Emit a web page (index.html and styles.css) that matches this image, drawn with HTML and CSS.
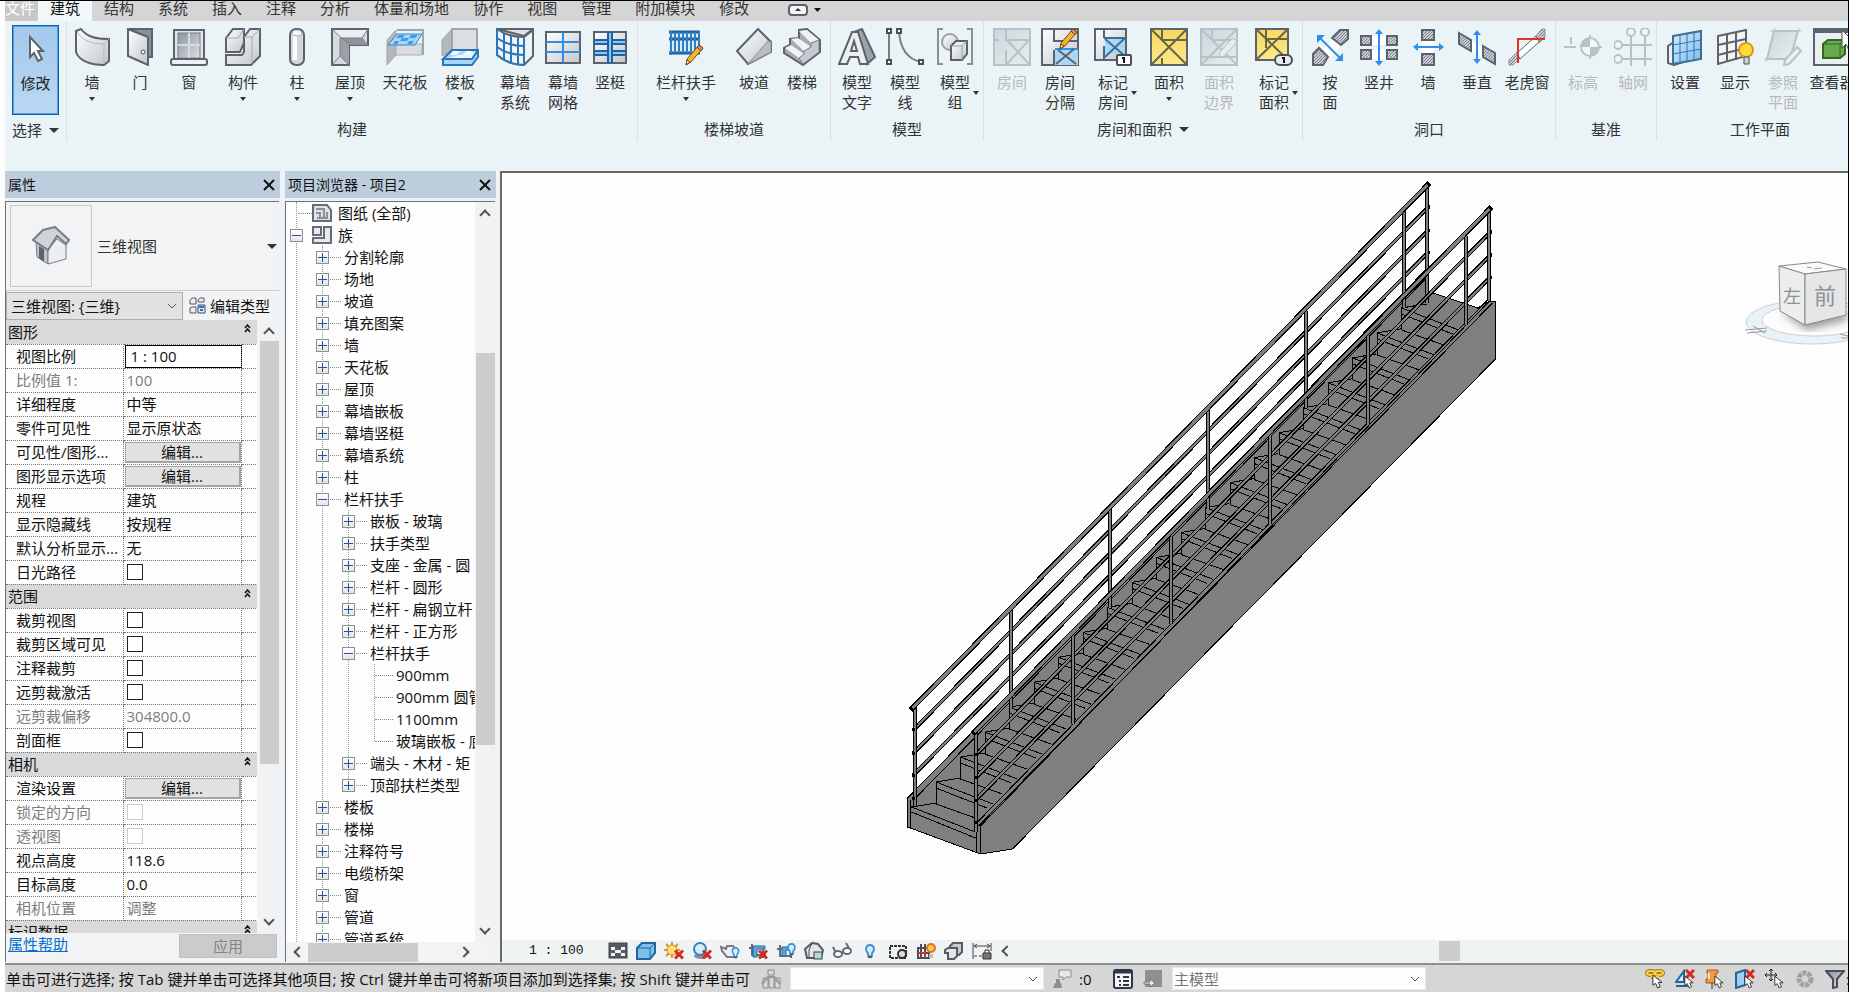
FILE: index.html
```html
<!DOCTYPE html>
<html lang="zh-CN">
<head>
<meta charset="utf-8">
<title>项目2 - 三维视图: {三维}</title>
<link rel="stylesheet" href="styles.css">
</head>
<body>
<svg class="defs" aria-hidden="true">
  <defs>
    <linearGradient id="g" x1="0" y1="0" x2="1" y2="1"><stop offset="0" stop-color="#fff"/><stop offset="1" stop-color="#c3c6cc"/></linearGradient>
    <linearGradient id="gd" x1="0" y1="0" x2="1" y2="1"><stop offset="0" stop-color="#8d939c"/><stop offset="1" stop-color="#dde0e4"/></linearGradient>
    <linearGradient id="gb" x1="0" y1="0" x2="1" y2="1"><stop offset="0" stop-color="#d4ebfa"/><stop offset="1" stop-color="#7fbbe8"/></linearGradient>
    <linearGradient id="gy" x1="0" y1="0" x2="0" y2="1"><stop offset="0" stop-color="#f8d860"/><stop offset="1" stop-color="#fbe98c"/></linearGradient>
    <pattern id="hatch" width="3" height="3" patternUnits="userSpaceOnUse"><rect width="3" height="3" fill="#c9ccd1"/><path d="M0 3L3 0" stroke="#7b818a"/></pattern>
    <symbol id="pencil" viewBox="0 0 20 22"><path d="M15 1l4 3L7 18l-5 3 1-6z" fill="#f5b52a" stroke="#6b4a1c"/><path d="M15 1l4 3-2 3-4-4z" fill="#e58a72" stroke="#6b4a1c"/><path d="M2 21l1-5 3 2z" fill="#fff3da" stroke="#6b4a1c"/></symbol>
    <symbol id="x" viewBox="0 0 10 10"><path d="M1 1l8 8M9 1l-8 8" stroke="#d22a24" stroke-width="3"/></symbol>
    <symbol id="bulb" viewBox="0 0 10 16"><path d="M3 10C-1 6 1 1 5 1s6 5 2 9v3H3z" fill="#d8efff" stroke="#3e8fd0" stroke-width="2"/><path d="M3 14h4" stroke="#555" stroke-width="2"/></symbol>
    <symbol id="cur" viewBox="0 0 12 16"><path d="M1 1v11l3-2 2 5 3-1-2-5h4z" fill="#fff" stroke="#222"/></symbol>
  </defs>
</svg>
<div class="app">
  <nav class="tabs">
    <button class="tab file">文件</button><button class="tab active">建筑</button><button class="tab">结构</button><button class="tab">系统</button><button class="tab">插入</button><button class="tab">注释</button><button class="tab">分析</button><button class="tab">体量和场地</button><button class="tab">协作</button><button class="tab">视图</button><button class="tab">管理</button><button class="tab">附加模块</button><button class="tab">修改</button>
    <button class="tab-toggle" aria-label="最小化功能区"><svg width="34" height="12"><rect x="1" y="1" width="18" height="10" rx="3" fill="#f5f5f7" stroke="#5d6068" stroke-width="2"/><path d="M7 7l3-3 3 3z" fill="#333"/><path d="M26 4h7l-3.500 4z" fill="#111"/></svg></button>
  </nav>

  <section class="ribbon">
    <div class="group select-group">
      <button class="modify"><svg width="20" height="30" viewBox="0 0 20 30"><path d="M4 3v20l4-4 4 8 4-2-4-8h5z" fill="#fff" stroke="#5d636c" stroke-width="2"/></svg><span>修改</span></button>
      <button class="title">选择<i class="tri big"></i></button>
    </div>

    <div class="group">
      <div class="tools">
        <button class="tool w50"><svg viewBox="0 0 38 38"><path d="M3 3l5-2c6 8 15 10 28 10v22l-5 4C18 37 6 33 3 24z" fill="url(#g)" stroke="#5d636c" stroke-width="2"/><path d="M4 4c6 9 15 12 27 12v20M31 16l5-5" fill="none" stroke="#b5bac1"/></svg><span class="lab">墙</span><i class="tri"></i></button>
        <button class="tool w46"><svg viewBox="0 0 38 38"><path d="M7 1h24v28h-5V9z" fill="#8b919b" stroke="#5d636c" stroke-width="2"/><path d="M7 1l20 8v28L7 28z" fill="url(#g)" stroke="#5d636c" stroke-width="2"/><circle cx="22" cy="24" r="2" fill="#fff" stroke="#4a4f57"/></svg><span class="lab">门</span></button>
        <button class="tool w52"><svg viewBox="0 0 38 38"><rect x="4" y="2" width="30" height="30" fill="#e3e6ea" stroke="#5d636c" stroke-width="2"/><rect x="8" y="5" width="22" height="25" fill="url(#gd)" stroke="#777d86"/><path d="M19 5v25M8 17h22" stroke="#cfdbe6" stroke-width="2"/><rect x="1" y="31" width="36" height="6" rx="2" fill="#f0f1f3" stroke="#5d636c" stroke-width="2"/></svg><span class="lab">窗</span></button>
        <button class="tool w56"><svg viewBox="0 0 38 38"><path d="M2 10l7-9h11v14l-4 9H2z" fill="url(#g)" stroke="#5d636c" stroke-width="2"/><path d="M26 1h10v27l-9 9H2V27h16l2-3V9z" fill="url(#g)" stroke="#5d636c" stroke-width="2"/><path d="M2 10h12l6-9M20 9h8l8-8M28 9v27" fill="none" stroke="#a6abb2"/></svg><span class="lab">构件</span><i class="tri"></i></button>
        <button class="tool w52"><svg viewBox="0 0 38 38"><rect x="12" y="1" width="14" height="36" rx="6" fill="#d3d6db" stroke="#5d636c" stroke-width="2"/><path d="M17 7v25" stroke="#fff" stroke-width="4"/><ellipse cx="19" cy="5" rx="5" ry="3" fill="#f5f6f7" stroke="#a6abb2"/></svg><span class="lab">柱</span><i class="tri"></i></button>
        <button class="tool w54"><svg viewBox="0 0 38 38"><path d="M1 1h36v16H18v20H1z" fill="#d6d9dd" stroke="#5d636c" stroke-width="2"/><path d="M9 10h22l5 7H18z" fill="#8e949d"/><path d="M9 10l9 7v19l-9-8z" fill="#9aa0a8"/><path d="M2 2l7 8h22l5-8z" fill="#eceef0"/><path d="M1 1l17 16M31 10l6-9M31 10l6 7M9 28l-8 9M9 28l9 9M9 10h22M9 10v18" stroke="#7b818a" fill="none"/></svg><span class="lab">屋顶</span><i class="tri"></i></button>
        <button class="tool w56"><svg viewBox="0 0 38 38"><path d="M1 12v25l9-10V2z" fill="#b3b8bf" stroke="#a0a5ad"/><path d="M10 16h26v11H10z" fill="#d9dbdf" stroke="#a9aeb5"/><path d="M11 2h26v25" fill="none" stroke="#a0a5ad" stroke-width="2"/><path d="M11 6h25l-7 11H2z" fill="#a8d6f8" stroke="#3484c6"/><path d="M13 7h6l-3 3h-6zM25 7h7l-3 3h-6zM16 10h7l-2 3h-7zM9 13h4l-2 3H7zM23 13h5l-2 3h-5z" fill="#3e9bee"/></svg><span class="lab">天花板</span></button>
        <button class="tool w54"><svg viewBox="0 0 38 38"><path d="M1 28V12L11 1v22z" fill="#b3b8bf" stroke="#a0a5ad"/><path d="M11 1h25v22H11z" fill="#dcdee2" stroke="#a0a5ad" stroke-width="2"/><path d="M2 31l9-9h26l-6 9zM2 31v6h29l6-8v-6" fill="#a8d6f8" stroke="#2b76b8" stroke-width="2"/><path d="M12 23h7l-3 4h-6zM25 23h6l-3 4h-6zM17 27h5l-2 3h-6z" fill="#f0f9ff"/></svg><span class="lab">楼板</span><i class="tri"></i></button>
        <button class="tool w56"><svg viewBox="0 0 38 38"><path d="M1 1h36l-9 7z" fill="#dfe2e6" stroke="#5d636c" stroke-width="2"/><path d="M1 1c8 6 16 8 27 8l9-7v26l-9 9C17 37 8 33 1 27z" fill="#eef4f9" stroke="#5d636c" stroke-width="2"/><path d="M1 10c8 6 16 8 27 8M1 19c8 6 16 8 27 8M8 5v27M15 8v27M22 9v27M28 10v27M1 1v26c7 6 16 10 27 10" fill="none" stroke="#2b76b8" stroke-width="2"/></svg><span class="lab">幕墙<br>系统</span></button>
        <button class="tool w40"><svg viewBox="0 0 38 38"><rect x="2" y="4" width="34" height="31" fill="url(#g)" stroke="#5d636c" stroke-width="2"/><path d="M19 4v31M2 14h34M2 24h34" stroke="#2f8fe8" stroke-width="2"/></svg><span class="lab">幕墙<br>网格</span></button>
        <button class="tool w54"><svg viewBox="0 0 38 38"><rect x="3" y="4" width="32" height="31" fill="url(#g)" stroke="#5d636c" stroke-width="2"/><path d="M3 14h32M3 25h32" stroke="#1d62a3" stroke-width="6"/><path d="M4 14h30M4 25h30" stroke="#8cc6f2" stroke-width="2"/><path d="M19 4v31" stroke="#1d62a3" stroke-width="6"/><path d="M19 5v29" stroke="#8cc6f2" stroke-width="2"/></svg><span class="lab">竖梃</span></button>
      </div>
      <div class="title">构建</div>
    </div>

    <div class="group">
      <div class="tools">
        <button class="tool w96"><svg viewBox="0 0 38 38"><path d="M2 3h30v24H2z" fill="#d9ecfa"/><path d="M2 4h31M2 11h31M2 25h31" stroke="#1d62a3" stroke-width="3"/><path d="M4 3v24M8 4v21M12 4v21M16 4v21M20 4v21M24 4v21M28 4v21M32 3v20" stroke="#2f7fc4" stroke-width="2"/><use href="#pencil" x="17" y="16" width="20" height="22"/></svg><span class="lab">栏杆扶手</span><i class="tri"></i></button>
        <button class="tool w40"><svg viewBox="0 0 38 38"><path d="M2 23L23 1l13 13v10L13 36z" fill="url(#g)" stroke="#5d636c" stroke-width="2"/><path d="M13 36L33 13l3 1v10z" fill="#b9bdc4" stroke="#8a9098"/></svg><span class="lab">坡道</span></button>
        <button class="tool w56"><svg viewBox="0 0 38 38"><path d="M1 20l6-3v-6l9-1V2l8-1 13 11v12L20 37 1 25z" fill="#a6abb3" stroke="#5d636c" stroke-width="2"/><path d="M2 20l6-3 13 9-5 4zM8 11l7-1 13 9-7 4zM16 3l8-1 12 10-8 3z" fill="#f1f2f4"/><path d="M16 30l5-4v-3l7-4v-4l8-3v12L20 36z" fill="#c6cad0" stroke="#777d86"/></svg><span class="lab">楼梯</span></button>
      </div>
      <div class="title">楼梯坡道</div>
    </div>

    <div class="group">
      <div class="tools">
        <button class="tool w52"><svg viewBox="0 0 38 38"><path d="M16 4l8-3 13 28-8 7z" fill="#9ca2ab" stroke="#5d636c" stroke-width="2"/><path d="M14 4h6l10 32h-8l-2-7h-8l-3 7H1zM16 13l-3 10h6z" fill="#eceef0" fill-rule="evenodd" stroke="#5d636c" stroke-width="2"/></svg><span class="lab">模型<br>文字</span></button>
        <button class="tool w44"><svg viewBox="0 0 38 38"><path d="M3 3v31M13 3c1 18 8 28 22 31" stroke="#777d86" stroke-width="2" fill="none"/><path d="M1 1h4v4H1zM1 32h4v4H1zM11 1h4v4h-4zM33 32h4v4h-4z" fill="#fff" stroke="#4a4f57" stroke-width="2"/></svg><span class="lab">模型<br>线</span></button>
        <button class="tool w56"><svg viewBox="0 0 38 38"><path d="M7 1H2v35h5M31 1h5v35h-5" fill="none" stroke="#8a9098" stroke-width="2"/><circle cx="14" cy="14" r="8" fill="url(#g)" stroke="#9aa0a8" stroke-width="2"/><path d="M15 18l5-5h11v13l-5 6H15z" fill="url(#g)" stroke="#5d636c" stroke-width="2"/><path d="M15 18h11v14M26 18l5-5" stroke="#9aa0a8" fill="none"/></svg><span class="lab">模型<br>组<i class="tri"></i></span></button>
      </div>
      <div class="title">模型</div>
    </div>

    <div class="group">
      <div class="tools">
        <button class="tool w56" disabled><svg viewBox="0 0 38 38"><rect x="1" y="1" width="36" height="36" fill="url(#gd)" stroke="#4a4f57" stroke-width="2"/><path d="M13 2v12M13 22v14M13 12h24M14 12l22 24M36 12L14 36M1 12h5" stroke="#4a4f57" stroke-width="2"/></svg><span class="lab">房间</span></button>
        <button class="tool w40"><svg viewBox="0 0 38 38"><rect x="1" y="1" width="36" height="36" fill="url(#g)" stroke="#5d636c" stroke-width="2"/><path d="M14 21h23v16H14z" fill="#a9d8f5"/><path d="M14 21h23" stroke="#2f8fe8" stroke-width="2"/><path d="M13 2v12M13 22v14M14 13h23M15 36l18-15M17 22l18 14" stroke="#5d636c" stroke-width="2"/><use href="#pencil" x="17" y="0" width="20" height="22"/></svg><span class="lab">房间<br>分隔</span></button>
        <button class="tool w66"><svg viewBox="0 0 38 38"><rect x="1" y="1" width="31" height="31" fill="url(#g)" stroke="#5d636c" stroke-width="2"/><path d="M11 10h20v16H11z" fill="#a9d8f5"/><path d="M10 2v8M10 18v13M10 10h22M11 11l20 17M31 10L11 29" stroke="#3e6e94" stroke-width="2"/><rect x="23" y="27" width="14" height="10" rx="1" fill="#fff" stroke="#4a4f57" stroke-width="2"/><path d="M28 30h2v5" stroke="#111" stroke-width="2" fill="none"/></svg><span class="lab">标记<br>房间<i class="tri"></i></span></button>
        <button class="tool w46"><svg viewBox="0 0 38 38"><rect x="1" y="1" width="36" height="36" fill="url(#gy)" stroke="#5d636c" stroke-width="2"/><path d="M2 2l34 34M36 2L2 36M12 2v10M12 30v6M12 12h24" stroke="#6b6548" stroke-width="2"/></svg><span class="lab">面积</span><i class="tri"></i></button>
        <button class="tool w54" disabled><svg viewBox="0 0 38 38"><rect x="1" y="1" width="36" height="36" fill="url(#gd)" stroke="#4a4f57" stroke-width="2"/><path d="M2 2l34 34M36 2L2 36M12 2v10M2 29h34M12 12h24" stroke="#4a4f57" stroke-width="2"/><path d="M33 10l4 4-13 14-5 1 1-5z" fill="#ddd" stroke="#4a4f57"/></svg><span class="lab">面积<br>边界</span></button>
        <button class="tool w56"><svg viewBox="0 0 38 38"><rect x="1" y="1" width="32" height="31" fill="url(#gy)" stroke="#5d636c" stroke-width="2"/><path d="M2 2l30 29M32 2L2 31M11 2v18M11 11h21" stroke="#6b6548" stroke-width="2"/><rect x="20" y="27" width="17" height="10" rx="5" fill="#e9eaec" stroke="#4a4f57" stroke-width="2"/><path d="M27 30h2v5" stroke="#111" stroke-width="2" fill="none"/></svg><span class="lab">标记<br>面积<i class="tri"></i></span></button>
      </div>
      <button class="title">房间和面积<i class="tri big"></i></button>
    </div>

    <div class="group">
      <div class="tools">
        <button class="tool w54"><svg viewBox="0 0 38 38"><path d="M12 21l12-12 7 7-12 13z" fill="#fff"/><path d="M2 26l6-6 9 9-5 8H2zM21 10l8-8h8v9l-7 6z" fill="url(#hatch)" stroke="#5d636c" stroke-width="2"/><path d="M8 9l22 22" stroke="#2f8fe8" stroke-width="2"/><path d="M6 7h8l-8 8zM32 33h-8l8-8z" fill="#2f8fe8"/></svg><span class="lab">按<br>面</span></button>
        <button class="tool w44"><svg viewBox="0 0 38 38"><path d="M10 8h18v9H10zM10 22h18v9H10z" fill="#fff"/><path d="M1 8h10v9H1zM27 8h10v9H27zM1 22h10v9H1zM27 22h10v9H27z" fill="url(#hatch)" stroke="#5d636c" stroke-width="2"/><path d="M19 6v27" stroke="#2f8fe8" stroke-width="2"/><path d="M15 6l4-5 4 5zM15 33l4 5 4-5z" fill="#2f8fe8"/></svg><span class="lab">竖井</span></button>
        <button class="tool w54"><svg viewBox="0 0 38 38"><path d="M13 12h12v14H13z" fill="#fff"/><path d="M13 2h12v10H13zM13 26h12v11H13z" fill="url(#hatch)" stroke="#5d636c" stroke-width="2"/><path d="M8 19h23" stroke="#2f8fe8" stroke-width="2"/><path d="M9 15l-5 4 5 4zM30 15l5 4-5 4z" fill="#2f8fe8"/></svg><span class="lab">墙</span></button>
        <button class="tool w44"><svg viewBox="0 0 38 38"><path d="M12 12l13 7v11l-13-8z" fill="#fff"/><path d="M1 5l12 7v11L1 16zM25 18l12 7v11l-12-7z" fill="url(#hatch)" stroke="#5d636c" stroke-width="2"/><path d="M19 6v26" stroke="#2f8fe8" stroke-width="2"/><path d="M15 7l4-5 4 5zM15 31l4 5 4-5z" fill="#2f8fe8"/></svg><span class="lab">垂直</span></button>
        <button class="tool w56"><svg viewBox="0 0 38 38"><path d="M1 37v-5l8-8 3 6-7 7zM27 9l7-8h3v8l-6 6z" fill="url(#hatch)" stroke="#8a9098"/><path d="M9 25L28 8l3 6-19 17z" fill="#fff" stroke="#5d636c"/><path d="M10 35V11h27" stroke="#e0342b" stroke-width="2" fill="none"/></svg><span class="lab">老虎窗</span></button>
      </div>
      <div class="title">洞口</div>
    </div>

    <div class="group">
      <div class="tools">
        <button class="tool w54" disabled><svg viewBox="0 0 38 38"><path d="M0 19h12M34 19h4M26 7v4M26 27v4M7 9v7" stroke="#4a4f57" stroke-width="2"/><circle cx="26" cy="19" r="9" fill="#fff" stroke="#4a4f57" stroke-width="2"/><path d="M26 10v18a9 9 0 0 0 9-9H17a9 9 0 0 1 9-9z" fill="#4a4f57"/></svg><span class="lab">标高</span></button>
        <button class="tool w46" disabled><svg viewBox="0 0 38 38"><path d="M17 8v30M31 8v30M8 17h30M8 31h30" stroke="#4a4f57" stroke-width="2"/><g fill="#fff" stroke="#4a4f57" stroke-width="2"><circle cx="17" cy="4" r="4"/><circle cx="31" cy="4" r="4"/><circle cx="4" cy="17" r="4"/><circle cx="4" cy="31" r="4"/></g></svg><span class="lab">轴网</span></button>
      </div>
      <div class="title">基准</div>
    </div>

    <div class="group last">
      <div class="tools">
        <button class="tool w56"><svg viewBox="0 0 38 38"><path d="M2 18l6-4v23l-6-2zM8 30l15-4v6L8 37z" fill="#eee" stroke="#5d636c" stroke-width="2"/><path d="M7 8l28-5v28L7 36z" fill="url(#gb)" stroke="#3e6e94" stroke-width="2"/><path d="M14 7v28M21 6v27M28 4v28M7 17l28-5M7 26l28-5" stroke="#2b76b8" fill="none"/></svg><span class="lab">设置</span></button>
        <button class="tool w44"><svg viewBox="0 0 38 38"><path d="M2 8l28-6v26L2 36z" fill="#f2f3f5" stroke="#5d636c" stroke-width="2"/><path d="M11 6v28M20 4v28M2 17l28-6M2 27l28-7" stroke="#5d636c" stroke-width="2"/><circle cx="30" cy="22" r="7" fill="#ffdc3c" stroke="#d99a1e" stroke-width="2"/><path d="M28 29h5v7h-5z" fill="#ccd0d6" stroke="#4a4f57"/></svg><span class="lab">显示</span></button>
        <button class="tool w52" disabled><svg viewBox="0 0 38 38"><path d="M10 3h24l-8 28H3z" fill="url(#gd)" stroke="#4a4f57" stroke-width="2"/><path d="M6 3h31M0 31h28M11 0L2 34M35 0l-4 14" stroke="#4a4f57"/><path d="M33 19l4 4-12 13-5 1 1-5z" fill="#eee" stroke="#4a4f57" stroke-width="2"/></svg><span class="lab">参照<br>平面</span></button>
        <button class="tool w46"><svg viewBox="0 0 38 38"><rect x="1" y="1" width="38" height="36" fill="#eceff1" stroke="#5d636c" stroke-width="2"/><path d="M0 0h38v5H0z" fill="#5d636c"/><path d="M10 16l5-4h17v14l-5 4H10z" fill="#6aa84f" stroke="#2c6a1e" stroke-width="2"/><path d="M10 16h17v14M27 16l5-4" fill="none" stroke="#2c6a1e"/><path d="M29 2v18l4-4 3 6 2-1V11z" fill="#fff" stroke="#4a4f57"/></svg><span class="lab">查看器</span></button>
      </div>
      <div class="title">工作平面</div>
    </div>
  </section>

  <main class="work">
    <aside class="panel props">
      <header class="bar"><h2>属性</h2><button class="close" aria-label="关闭属性"><svg width="12" height="12"><path d="M1 1l10 10M11 1L1 11" stroke="#111" stroke-width="2"/></svg></button></header>
      <div class="body">
        <div class="type">
          <div class="thumb"><svg width="38" height="40" viewBox="0 0 38 40"><path d="M4 15l12 9v14L5 31z" fill="#bfc3c9" stroke="#777d86"/><path d="M16 23l9-10 9 6v14l-18 5z" fill="#eceef0" stroke="#777d86"/><path d="M7 20l5 3v13l-5-4z" fill="#5d636c"/><path d="M1 14L11 4l12-3L37 14l-3 4-9-8-9 14z" fill="#d0d3d8" stroke="#777d86" stroke-width="2"/></svg></div>
          <span>三维视图</span><button class="open" aria-label="类型选择器"><i class="tri big"></i></button>
        </div>
        <div class="instance">
          <select aria-label="视图"><option>三维视图: {三维}</option></select>
          <button class="edit-type"><svg width="17" height="17"><path d="M1 3l2-2h4v6H1zM9 3l2-2h4v4H9zM1 11l2-1h4v6H1z" fill="#eceef0" stroke="#555b64"/><path d="M9 8h7v8H9z" fill="#d9ecfa" stroke="#3b4a5c"/><path d="M10 10h5M11 13h3" stroke="#2b76b8" stroke-width="2"/></svg>编辑类型</button>
        </div>
        <div class="grid-wrap">
          <div class="grid">
            <table>
              <colgroup><col class="c1"><col class="c2"><col class="c3"></colgroup>
              <tr class="sec"><th colspan="3">图形</th></tr>
              <tr><td><label for="scale">视图比例</label></td><td class="flush"><input id="scale" type="text" value="1 : 100"></td><td></td></tr>
              <tr class="off"><td>比例值 1:</td><td>100</td><td></td></tr>
              <tr><td>详细程度</td><td>中等</td><td></td></tr>
              <tr><td>零件可见性</td><td>显示原状态</td><td></td></tr>
              <tr><td>可见性/图形...</td><td class="flush"><button class="edit">编辑...</button></td><td></td></tr>
              <tr><td>图形显示选项</td><td class="flush"><button class="edit">编辑...</button></td><td></td></tr>
              <tr><td>规程</td><td>建筑</td><td></td></tr>
              <tr><td>显示隐藏线</td><td>按规程</td><td></td></tr>
              <tr><td>默认分析显示...</td><td>无</td><td></td></tr>
              <tr><td><label for="k1">日光路径</label></td><td><input id="k1" type="checkbox"></td><td></td></tr>
              <tr class="sec"><th colspan="3">范围</th></tr>
              <tr><td><label for="k2">裁剪视图</label></td><td><input id="k2" type="checkbox"></td><td></td></tr>
              <tr><td><label for="k3">裁剪区域可见</label></td><td><input id="k3" type="checkbox"></td><td></td></tr>
              <tr><td><label for="k4">注释裁剪</label></td><td><input id="k4" type="checkbox"></td><td></td></tr>
              <tr><td><label for="k5">远剪裁激活</label></td><td><input id="k5" type="checkbox"></td><td></td></tr>
              <tr class="off"><td>远剪裁偏移</td><td>304800.0</td><td></td></tr>
              <tr><td><label for="k6">剖面框</label></td><td><input id="k6" type="checkbox"></td><td></td></tr>
              <tr class="sec"><th colspan="3">相机</th></tr>
              <tr><td>渲染设置</td><td class="flush"><button class="edit">编辑...</button></td><td></td></tr>
              <tr class="off"><td><label for="k7">锁定的方向</label></td><td><input id="k7" type="checkbox" disabled></td><td></td></tr>
              <tr class="off"><td><label for="k8">透视图</label></td><td><input id="k8" type="checkbox" disabled></td><td></td></tr>
              <tr><td>视点高度</td><td>118.6</td><td></td></tr>
              <tr><td>目标高度</td><td>0.0</td><td></td></tr>
              <tr class="off"><td>相机位置</td><td>调整</td><td></td></tr>
              <tr class="sec"><th colspan="3">标识数据</th></tr>
            </table>
          </div>
          <div class="vbar p"><i class="chev up"></i><div class="track"><div class="knob"></div></div><i class="chev down"></i></div>
        </div>
        <footer><a href="#help">属性帮助</a><button class="apply" disabled>应用</button></footer>
      </div>
    </aside>

    <aside class="panel browser">
      <header class="bar"><h2>项目浏览器 - 项目2</h2><button class="close" aria-label="关闭项目浏览器"><svg width="12" height="12"><path d="M1 1l10 10M11 1L1 11" stroke="#111" stroke-width="2"/></svg></button></header>
      <div class="body">
        <div class="tree-wrap">
          <ul class="tree">
            <li class="leaf0"><div class="row"><svg width="20" height="18"><path d="M1 1h14l4 5v11H1z" fill="#dfe2e6" stroke="#666c75" stroke-width="2"/><path d="M4 5h8v8M4 9h4v5M15 8v6H5" fill="none" stroke="#8a9098" stroke-width="2"/></svg>图纸 (全部)</div></li>
            <li><div class="row"><button class="exp minus" aria-label="折叠"></button><svg class="cat" width="20" height="18"><path d="M1 1h8v8H1zM12 1h7v16H1v-5h11z" fill="#e8eaed" stroke="#666c75" stroke-width="2"/></svg>族</div>
              <ul class="l1">
                <li><div class="row"><button class="exp" aria-label="展开"></button><span>分割轮廓</span></div></li>
                <li><div class="row"><button class="exp" aria-label="展开"></button><span>场地</span></div></li>
                <li><div class="row"><button class="exp" aria-label="展开"></button><span>坡道</span></div></li>
                <li><div class="row"><button class="exp" aria-label="展开"></button><span>填充图案</span></div></li>
                <li><div class="row"><button class="exp" aria-label="展开"></button><span>墙</span></div></li>
                <li><div class="row"><button class="exp" aria-label="展开"></button><span>天花板</span></div></li>
                <li><div class="row"><button class="exp" aria-label="展开"></button><span>屋顶</span></div></li>
                <li><div class="row"><button class="exp" aria-label="展开"></button><span>幕墙嵌板</span></div></li>
                <li><div class="row"><button class="exp" aria-label="展开"></button><span>幕墙竖梃</span></div></li>
                <li><div class="row"><button class="exp" aria-label="展开"></button><span>幕墙系统</span></div></li>
                <li><div class="row"><button class="exp" aria-label="展开"></button><span>柱</span></div></li>
                <li><div class="row"><button class="exp minus" aria-label="折叠"></button><span>栏杆扶手</span></div>
                  <ul class="l2">
                    <li><div class="row"><button class="exp" aria-label="展开"></button><span>嵌板 - 玻璃</span></div></li>
                    <li><div class="row"><button class="exp" aria-label="展开"></button><span>扶手类型</span></div></li>
                    <li><div class="row"><button class="exp" aria-label="展开"></button><span>支座 - 金属 - 圆</span></div></li>
                    <li><div class="row"><button class="exp" aria-label="展开"></button><span>栏杆 - 圆形</span></div></li>
                    <li><div class="row"><button class="exp" aria-label="展开"></button><span>栏杆 - 扁钢立杆</span></div></li>
                    <li><div class="row"><button class="exp" aria-label="展开"></button><span>栏杆 - 正方形</span></div></li>
                    <li><div class="row"><button class="exp minus" aria-label="折叠"></button><span>栏杆扶手</span></div>
                      <ul class="l3">
                        <li><div class="row"><span>900mm</span></div></li>
                        <li><div class="row"><span>900mm 圆管</span></div></li>
                        <li><div class="row"><span>1100mm</span></div></li>
                        <li><div class="row"><span>玻璃嵌板 - 底</span></div></li>
                      </ul>
                    </li>
                    <li><div class="row"><button class="exp" aria-label="展开"></button><span>端头 - 木材 - 矩</span></div></li>
                    <li><div class="row"><button class="exp" aria-label="展开"></button><span>顶部扶栏类型</span></div></li>
                  </ul>
                </li>
                <li><div class="row"><button class="exp" aria-label="展开"></button><span>楼板</span></div></li>
                <li><div class="row"><button class="exp" aria-label="展开"></button><span>楼梯</span></div></li>
                <li><div class="row"><button class="exp" aria-label="展开"></button><span>注释符号</span></div></li>
                <li><div class="row"><button class="exp" aria-label="展开"></button><span>电缆桥架</span></div></li>
                <li><div class="row"><button class="exp" aria-label="展开"></button><span>窗</span></div></li>
                <li><div class="row"><button class="exp" aria-label="展开"></button><span>管道</span></div></li>
                <li><div class="row"><button class="exp" aria-label="展开"></button><span>管道系统</span></div></li>
              </ul>
            </li>
          </ul>
          <div class="vbar b"><i class="chev up"></i><div class="track"><div class="knob"></div></div><i class="chev down"></i></div>
        </div>
        <div class="hbar"><i class="chev left"></i><div class="knob"></div><i class="chev right"></i></div>
      </div>
    </aside>

    <section class="view">
      <div class="canvas">
        <svg class="model" viewBox="503 173 1345 767" shape-rendering="crispEdges">
          <defs>
            <path id="step" d="M0 22V0L24-4M0 0L57 22M0 6L51 26M0 22L42 37"/>
            <path id="rail" d="M0 0L515-523"/>
            <g id="steps5"><use href="#step"/><use href="#step" x="24.500" y="-24.950"/><use href="#step" x="49" y="-49.900"/><use href="#step" x="73.500" y="-74.850"/><use href="#step" x="98" y="-99.800"/></g>
            <g id="lower-rails"><use href="#rail" y="24"/><use href="#rail" y="47"/><use href="#rail" y="69"/></g>
          </defs>
          <path d="M908 798L1428 268V291L1478 308L1490 301L1496 302V359L1013 849L981 854L908 827Z" fill="#7f7f7f" stroke="#000"/>
          <g fill="none" stroke="#000">
            <use href="#steps5" x="936.500" y="782"/><use href="#steps5" x="1059" y="657.250"/><use href="#steps5" x="1181.500" y="532.500"/><use href="#steps5" x="1304" y="407.750"/>
            <path d="M912 807L937 803M912 807L976 832M912 812L976 838M911 800V828M914 800L1428 277M1402 308L1428 304"/>
          </g>
          <g fill="none" stroke="#000" stroke-width="4"><use href="#lower-rails" x="914" y="706"/></g>
          <g fill="none" stroke="#7f7f7f" stroke-width="2"><use href="#lower-rails" x="914" y="706"/></g>
          <path d="M915 706V806M1011 610V708M1110 508V608M1208 410V509M1306 311V408M1404 211V308M1427 184V303" stroke="#000" stroke-width="4"/>
          <path d="M915 706V806M1011 610V708M1110 508V608M1208 410V509M1306 311V408M1404 211V308M1427 184V303" stroke="#7f7f7f" stroke-width="2"/>
          <use href="#rail" x="913" y="708" stroke="#000" stroke-width="5" stroke-linecap="square"/><use href="#rail" x="913" y="708" stroke="#7f7f7f" stroke-width="3"/>
          <path d="M981 826L1490 301L1496 302V359L1013 849L981 854Z" fill="#7f7f7f" stroke="#000"/>
          <path d="M977 823L1488 300M979 826L1493 303M977 823V853" fill="none" stroke="#000"/>
          <g fill="none" stroke="#000" stroke-width="4"><use href="#lower-rails" x="976" y="731"/></g>
          <g fill="none" stroke="#7f7f7f" stroke-width="2"><use href="#lower-rails" x="976" y="731"/></g>
          <path d="M976 731V832M1073 636V724M1171 537V624M1270 435V524M1368 336V425M1466 236V325M1489 208V301" stroke="#000" stroke-width="4"/>
          <path d="M976 731V832M1073 636V724M1171 537V624M1270 435V524M1368 336V425M1466 236V325M1489 208V301" stroke="#7f7f7f" stroke-width="2"/>
          <use href="#rail" x="975" y="732" stroke="#000" stroke-width="5" stroke-linecap="square"/><use href="#rail" x="975" y="732" stroke="#7f7f7f" stroke-width="3"/>
          <path d="M912 728h3v3h-3zM912 752h3v3h-3zM912 774h3v3h-3zM912 797h3v3h-3zM974 753h3v3h-3zM974 776h3v3h-3zM974 799h3v3h-3zM974 821h3v3h-3zM1428 205h2v3h-2zM1428 229h2v3h-2zM1428 251h2v3h-2zM1490 230h2v3h-2zM1490 253h2v3h-2zM1490 276h2v3h-2z"/>
        </svg>
        <svg class="cube" width="129" height="120" viewBox="0 0 129 120">
          <defs><filter id="soft"><feGaussianBlur stdDeviation="4"/></filter></defs>
          <ellipse cx="93" cy="82" rx="66" ry="22" fill="#e9f3f7" stroke="#ccd0d3"/>
          <ellipse cx="95" cy="80" rx="52" ry="16" fill="#fdfdfd" stroke="#ccd0d3"/>
          <path d="M62 72L88 90L129 80V72Z" fill="#999" filter="url(#soft)"/>
          <path d="M60 26L99 22L127 29L86 34Z" fill="#fafafa" stroke="#888"/>
          <path d="M60 26L86 34V85L61 71Z" fill="#eceded" stroke="#888"/>
          <path d="M86 34L127 29V75L86 85Z" fill="#e6e6e8" stroke="#888"/>
          <text x="64" y="63" font-size="18" fill="#8b9098">左</text><text x="95" y="64" font-size="22" fill="#8b9098">前</text>
          <path d="M88 27l5 1M95 29l8-1M26 90l22-2M28 93l20-2M34 86l12 7M121 94l8 2M122 98h7" stroke="#999"/>
        </svg>
      </div>
      <div class="view-bar">
        <button class="scale">1 : 100</button>
        <div class="view-tools">
          <button aria-label="详细程度"><svg viewBox="0 0 20 18"><rect x="1" y="1" width="18" height="15" fill="#555b64" stroke="#444"/><path d="M3 5h4v3H3zM13 5h4v3h-4zM7 8h6v3H7zM3 11h4v3H3zM13 11h4v3h-4z" fill="#f3f3f3"/></svg></button>
          <button aria-label="视觉样式"><svg viewBox="0 0 20 18"><path d="M1 6l5-5h13v10l-5 6H1z" fill="#7dc0ee" stroke="#24659c" stroke-width="2"/><path d="M1 6h13v11M14 6l5-5" fill="none" stroke="#24659c"/></svg></button>
          <button aria-label="日光路径"><svg viewBox="0 0 20 18"><path d="M8 0v16M0 8h16M2 2l12 12M14 2L2 14" stroke="#e09a20" stroke-width="2"/><circle cx="8" cy="8" r="5" fill="#ffe07a" stroke="#d48a18"/><use href="#x" x="10" y="7" width="10" height="11"/></svg></button>
          <button aria-label="阴影"><svg viewBox="0 0 20 18"><ellipse cx="9" cy="14" rx="7" ry="3" fill="#8a8f97"/><circle cx="8" cy="7" r="6" fill="#d4ebfa" stroke="#3a84c0" stroke-width="2"/><use href="#x" x="10" y="7" width="10" height="11"/></svg></button>
          <button aria-label="渲染"><svg viewBox="0 0 20 18"><path d="M1 5l5 2 1-3h6l3 4-2 7H7L2 9z" fill="#eceef0" stroke="#777d86" stroke-width="2"/><use href="#bulb" x="11" y="5" width="9" height="12"/></svg></button>
          <button aria-label="裁剪视图"><svg viewBox="0 0 20 18"><path d="M1 6h14v10M4 2v11h14" fill="none" stroke="#666c75" stroke-width="2"/><path d="M5 4h12v3H9v8H5z" fill="#5aa6e6" stroke="#24659c"/><use href="#x" x="10" y="7" width="10" height="11"/></svg></button>
          <button aria-label="显示裁剪区域"><svg viewBox="0 0 20 18"><path d="M1 7h14v9M4 3v11h12" fill="none" stroke="#666c75" stroke-width="2"/><path d="M6 5h8v3h-4v6H6z" fill="#5aa6e6" stroke="#24659c"/><use href="#bulb" x="11" y="1" width="9" height="13"/></svg></button>
          <button aria-label="锁定视图"><svg viewBox="0 0 20 18"><path d="M1 7l7-6 6 1 5 6-2 8H3z" fill="#e3e5e8" stroke="#555b64" stroke-width="2"/><path d="M8 1L5 8v8" stroke="#4a4f57" fill="none"/><rect x="10" y="10" width="8" height="7" fill="#b5d8cf" stroke="#345"/></svg></button>
          <button aria-label="临时隐藏"><svg viewBox="0 0 20 18"><path d="M1 5l3 6M9 12l3-2M18 8L14 1" fill="none" stroke="#666c75" stroke-width="2"/><ellipse cx="6" cy="12" rx="4" ry="3" fill="#fff" stroke="#666c75" stroke-width="2"/><ellipse cx="15" cy="9" rx="4" ry="3" fill="#fff" stroke="#666c75" stroke-width="2"/></svg></button>
          <button aria-label="显示隐藏的图元"><svg viewBox="0 0 20 18"><use href="#bulb" x="5" y="2" width="10" height="15"/></svg></button>
          <button aria-label="临时视图属性"><svg viewBox="0 0 20 18"><path d="M2 4h16v12H2z" fill="#eee" stroke="#333" stroke-width="2" stroke-dasharray="3 1"/><circle cx="14" cy="12" r="4" fill="#ddd" stroke="#333" stroke-width="2"/></svg></button>
          <button aria-label="分析模型"><svg viewBox="0 0 20 18"><path d="M2 6h11v10H2zM5 2v14M9 2v14M2 11h11" fill="none" stroke="#4a4f57" stroke-width="2"/><path d="M2 11h7v5" stroke="#c33" stroke-width="2" fill="none"/><circle cx="15" cy="6" r="4" fill="#ffc54a" stroke="#e0741b" stroke-width="2"/><path d="M13 12h4v4h-4z" fill="#b9bdc4"/></svg></button>
          <button aria-label="位移集"><svg viewBox="0 0 20 18"><path d="M6 4l3-3h9v9l-3 3H6z" fill="#c6cad0" stroke="#555b64" stroke-width="2"/><path d="M1 8l3-2h9v8l-3 3H4V11H1z" fill="#e3e5e8" stroke="#555b64" stroke-width="2"/></svg></button>
          <button aria-label="显示约束"><svg viewBox="0 0 20 18"><path d="M1 1v16M19 1v8M2 4h16M5 2L2 4l3 2M15 2l3 2-3 2M2 14h3M7 14h3" fill="none" stroke="#444" stroke-width="1"/><path d="M11 11h8v6h-8z" fill="#777" stroke="#333"/><path d="M13 11V8h4v3" fill="none" stroke="#333"/></svg></button>
        </div>
        <i class="chev left small"></i>
        <div class="scroller"><div class="knob"></div></div>
      </div>
    </section>
  </main>

  <footer class="status">
    <span class="msg">单击可进行选择; 按 Tab 键并单击可选择其他项目; 按 Ctrl 键并单击可将新项目添加到选择集; 按 Shift 键并单击可</span>
    <svg class="s20" viewBox="0 0 20 20"><path d="M7 1h6v5H7zM2 9h5v10H2zM8 8h5v11H8zM14 9h5v10h-5z" fill="#d9d9d9" stroke="#8a8a8a"/><path d="M1 15l6-7 6 0 6 7" fill="none" stroke="#999" stroke-width="2"/></svg>
    <select class="combo" aria-label="工作集"><option></option></select>
    <svg class="s20 req" viewBox="0 0 20 20"><path d="M7 1h12v7h-5l-3 3V8H7z" fill="#e8e8e8" stroke="#8a8a8a"/><path d="M1 19l2-5h6l1 5zM4 10h4v4H4z" fill="#8f8f8f"/></svg>
    <span class="count">:0</span>
    <svg class="s20 opt" viewBox="0 0 20 20"><rect x="1" y="1" width="18" height="18" rx="2" fill="#f5f5f5" stroke="#2d3748" stroke-width="2"/><path d="M1 3h18" stroke="#2d3748" stroke-width="3"/><path d="M4 8h3M10 8h6M6 12h2M10 12h6M6 16h2M10 16h6" stroke="#2d3748" stroke-width="2" fill="none"/></svg>
    <svg class="s20" viewBox="0 0 20 20"><path d="M2 1h17v17H2z" fill="#8f8f8f"/><path d="M1 13h6v-3l5 4-5 4v-3H1z" fill="#eee" stroke="#777"/></svg>
    <select class="combo main" aria-label="设计选项"><option>主模型</option></select>
    <div class="filters">
      <button aria-label="选择链接"><svg viewBox="0 0 20 20"><g fill="none" stroke="#a87a10" stroke-width="4"><ellipse cx="6" cy="4" rx="4" ry="2"/><ellipse cx="14" cy="4" rx="4" ry="2"/><path d="M6 8h8"/></g><g fill="none" stroke="#f5d24a" stroke-width="2"><ellipse cx="6" cy="4" rx="4" ry="2"/><ellipse cx="14" cy="4" rx="4" ry="2"/><path d="M6 8h8"/></g><use href="#cur" x="7" y="5" width="11" height="15"/></svg></button>
      <button aria-label="选择基线图元"><svg viewBox="0 0 20 20"><path d="M1 13L9 2v11zM1 17h12" fill="#d4ebfa" stroke="#24659c" stroke-width="2"/><use href="#x" x="10" y="0" width="10" height="10"/><use href="#cur" x="9" y="6" width="10" height="14"/></svg></button>
      <button aria-label="选择锁定图元"><svg viewBox="0 0 20 20"><path d="M2 1h11v3h-2v6h2v4H1v-4h2V4H2z" fill="#f29a3f" stroke="#b0541a"/><path d="M4 4v6" stroke="#ffe0b8" stroke-width="2"/><path d="M7 14v6" stroke="#333"/><use href="#cur" x="9" y="6" width="10" height="14"/></svg></button>
      <button aria-label="按面选择"><svg viewBox="0 0 20 20"><path d="M1 4l9-3v15l-9 3z" fill="#9fd0f2" stroke="#24659c" stroke-width="2"/><use href="#x" x="10" y="0" width="10" height="10"/><use href="#cur" x="9" y="6" width="10" height="14"/></svg></button>
      <button aria-label="选择时拖曳"><svg viewBox="0 0 20 20"><path d="M6 0v12M0 6h12M4 2l2-2 2 2M4 10l2 2 2-2M2 4L0 6l2 2M10 4l2 2-2 2" fill="none" stroke="#222"/><use href="#cur" x="9" y="6" width="10" height="14"/></svg></button>
      <button aria-label="后台进程"><svg viewBox="0 0 20 20"><circle cx="10" cy="10" r="6" fill="none" stroke="#a0a0a0" stroke-width="5" stroke-dasharray="4 1"/></svg></button>
      <button aria-label="过滤器"><svg viewBox="0 0 20 20"><path d="M1 2h18l-7 8v8l-4 1v-9z" fill="url(#gd)" stroke="#4a4f57" stroke-width="2"/></svg></button>
      <span>:</span>
    </div>
  </footer>
</div>
</body>
</html>
```
FILE: styles.css
```css
* { box-sizing: border-box; }
html, body { height: 100%; margin: 0; }
body {
  font: 15px/20px "Open Sans", "Noto Sans CJK SC", sans-serif;
  color: #111;
  background: #fdfdfd;
  overflow: hidden;
}
button, input, select { font: inherit; color: inherit; margin: 0; }
button { background: none; border: 0; padding: 0; }
h2 { margin: 0; font-weight: 400; font-size: 14px; }
ul { list-style: none; margin: 0; padding: 0; }
svg { flex: none; }
.defs { position: absolute; width: 0; height: 0; }
.app {
  display: flex;
  flex-direction: column;
  height: 100vh;
  padding-left: 5px;
  border-top: 1px solid #000;
  border-right: 1px solid #000;
}

/* tabs */
.tabs { display: flex; flex: none; height: 20px; background: #d5d5d5; }
.tab { padding: 0 12px 5px; line-height: 15px; color: #333; white-space: nowrap; }
.tab.file { padding: 0 3px 5px 0; background: #c8c8c8; color: #fff; }
.tab.active { background: #f2f8fa; color: #111; }
.tab-toggle { margin: 3px 0 0 27px; height: 12px; display: flex; }

/* ribbon */
.ribbon { display: flex; flex: none; height: 150px; background: #eaf4f7; overflow: hidden; }
.group { flex: none; height: 120px; border-left: 1px solid #e3dcdd; display: flex; flex-direction: column; }
.select-group { width: 61px; border: 0; }
.tools { display: flex; height: 97px; }
.title { display: flex; flex: none; justify-content: center; align-items: center; gap: 7px; height: 24px; color: #333; white-space: nowrap; }
.last .title { padding-left: 8px; }
.tool { flex: none; display: flex; flex-direction: column; align-items: center; padding-top: 7px; color: #333; }
.tool svg { width: 38px; height: 38px; margin-bottom: 6px; }
.lab { position: relative; white-space: nowrap; }
.lab .tri { position: absolute; right: -9px; top: 19px; }
.tool:disabled { color: #b8b8ba; }
.tool:disabled svg { opacity: 0.3; }
.w40 { width: 40px; } .w44 { width: 44px; } .w46 { width: 46px; } .w50 { width: 50px; } .w52 { width: 52px; }
.w54 { width: 54px; } .w56 { width: 56px; } .w66 { width: 66px; } .w96 { width: 96px; }
.tri { display: block; width: 0; height: 0; border: 3px solid transparent; border-top: 4px solid #333; border-bottom: 0; }
.tool > .tri { margin-top: 5px; }
.tri.big { border-width: 5px 5px 0; }
.modify {
  display: flex; flex: none; flex-direction: column; align-items: center; gap: 9px;
  width: 47px; height: 90px; margin: 4px 0 3px 7px; padding: 8px 0 21px;
  border: 1px solid #0a64b4; outline: 1px solid #5a9bd5; outline-offset: -2px;
  background: linear-gradient(#a3c8ea, #b9d9f3); color: #222;
}

/* docked panels */
.work { flex: 1; min-height: 0; display: flex; background: #eff3f5; padding-bottom: 1px; }
.panel { flex: none; display: flex; flex-direction: column; }
.props { width: 275px; margin-right: 5px; }
.browser { width: 211px; margin-right: 4px; }
.bar { display: flex; justify-content: space-between; align-items: center; height: 27px; flex: none; margin-bottom: 3px; padding: 0 4px 0 3px; background: #bdcddd; }
.close { display: flex; padding: 1px; }
.body { flex: 1; min-height: 0; display: flex; flex-direction: column; border: 1px solid #6d7278; border-width: 1px 0 0 1px; background: #f1f3f4; margin-right: 1px; }
.type { display: flex; align-items: center; height: 89px; padding: 0 2px 0 4px; border-bottom: 1px solid #ccc; color: #333; flex: none; }
.thumb { width: 82px; height: 82px; border: 1px solid #c8c8ce; display: flex; align-items: center; justify-content: center; margin-right: 5px; }
.type .open { margin-left: auto; }
.instance { display: flex; align-items: center; height: 29px; flex: none; }
select {
  appearance: none; border: 1px solid #adadad; border-radius: 0; padding: 0 4px;
  background: #e2e2e2 url("data:image/svg+xml,%3Csvg xmlns='http://www.w3.org/2000/svg' width='10' height='6'%3E%3Cpath d='M1 1l4 4 4-4' fill='none' stroke='%23555'/%3E%3C/svg%3E") no-repeat right 5px center;
}
.instance select { width: 177px; height: 28px; }
.edit-type { display: flex; align-items: center; gap: 4px; margin-left: 6px; }
.grid-wrap { flex: 1; min-height: 0; display: flex; }
.grid { width: 251px; overflow: hidden; background: #fdfdfd; }
table { table-layout: fixed; border-collapse: collapse; width: 251px; }
.c1 { width: 117px; } .c2 { width: 118px; } .c3 { width: 16px; }
td, th { height: 24px; padding: 0; line-height: 20px; text-align: left; font-weight: 400; white-space: nowrap; border: 1px dotted #777; border-left: 0; }
td:first-child { padding-left: 10px; }
td:nth-child(2) { padding-left: 3px; }
td.flush { padding-left: 1px; }
.sec th {
  padding-left: 2px; border: 0;
  background: #d9d9da url("data:image/svg+xml,%3Csvg xmlns='http://www.w3.org/2000/svg' width='7' height='9'%3E%3Cpath d='M1 4l2.500-3L6 4M1 8l2.500-3L6 8' fill='none' stroke='%23111' stroke-width='1.500'/%3E%3C/svg%3E") no-repeat right 6px top 4px;
}
.off td { color: #7d7d7d; }
td input[type=text] { display: block; width: 117px; height: 23px; border: 1px solid #000; padding: 0 5px; background: #fff; outline: none; }
td input[type=checkbox] { appearance: none; display: block; width: 16px; height: 16px; border: 1px solid #222; background: #fff; }
td input:disabled { border-color: #ccc; }
.edit { display: block; width: 116px; height: 21px; line-height: 18px; border: 1px solid #a5a5a5; border-width: 1px 2px 2px 1px; background: #e2e2e2; }
footer { display: flex; }
.props footer { justify-content: space-between; height: 29px; flex: none; padding: 1px 2px 0; }
.props footer a { color: #0a6fd0; line-height: 20px; }
.apply { width: 98px; height: 24px; background: #cbcbcb; border: 1px solid #c0c0c0; color: #858585; }

/* scroll bars */
.vbar { flex: none; width: 20px; display: flex; flex-direction: column; align-items: center; background: #f0f2f3; }
.vbar .track { flex: 1; width: 19px; min-height: 0; }
.knob { background: #cdcdcd; }
.p { margin-left: auto; }
.p .knob { height: 74%; }
.b .track { padding-top: 130px; }
.b .knob { height: 69%; }
.chev { flex: none; width: 8px; height: 8px; border: solid #555; border-width: 2px 0 0 2px; }
.up { transform: rotate(45deg); margin: 9px 0 4px; }
.down { transform: rotate(225deg); margin: 4px 0 9px; }
.left { transform: rotate(-45deg); }
.right { transform: rotate(135deg); }
.hbar { display: flex; align-items: center; height: 20px; flex: none; padding: 0 27px 0 9px; }
.hbar .knob { width: 110px; height: 19px; margin: 0 auto 0 5px; }

/* project tree */
.tree-wrap { flex: 1; min-height: 0; display: flex; }
.tree { flex: 1; min-width: 0; overflow: hidden; background: #fdfdfd; }
.tree, .tree ul, .tree li { position: relative; }
.row { display: flex; align-items: center; height: 22px; white-space: nowrap; }
.row span { display: flex; align-items: center; white-space: pre; }
.row span::before { content: ""; width: 11px; height: 0; margin: 0 3px 0 1px; border-top: 1px dotted #888; }
.row svg { margin-right: 6px; }
.leaf0 > .row::before { content: ""; width: 14px; margin-left: 12px; border-top: 1px dotted #888; }
.tree > li:not(.leaf0) > .row { padding-left: 4px; }
.row .cat { margin-left: 9px; }
.exp { position: relative; z-index: 1; flex: none; width: 13px; height: 13px; border: 1px solid #8a8f98; background: linear-gradient(#2b4fa0, #2b4fa0) center/9px 1px no-repeat, linear-gradient(#2b4fa0, #2b4fa0) center/1px 9px no-repeat, linear-gradient(#fff, #e4e4e4); }
.exp.minus { background: linear-gradient(#2b4fa0, #2b4fa0) center/9px 1px no-repeat, linear-gradient(#fff, #e4e4e4); }
.tree::before, .tree ul::before { content: ""; position: absolute; top: 0; bottom: 0; border-left: 1px dotted #999; }
.tree::before { left: 10px; }
.l1::before { left: 36px; }
.l1 .row { padding-left: 30px; }
.l2::before { left: 62px; }
.tree .l2::before { bottom: 11px; }
.l2 .row { padding-left: 56px; }
.l3::before { left: 88px; }
.tree .l3::before { bottom: 11px; }
.l3 .row { padding-left: 88px; }
.l3 .row span::before { width: 18px; }

/* 3D view */
.view { flex: 1; min-width: 0; display: flex; flex-direction: column; border: solid #666a60; border-width: 2px 0 0 2px; }
.canvas { position: relative; flex: 1; min-height: 0; background: #fdfdfd; }
.model { display: block; width: 100%; height: 100%; }
.cube { position: absolute; right: 0; top: 67px; }
.view-bar { display: flex; align-items: center; height: 22px; flex: none; background: #f0f3f3; }
.scale { font: 13px/20px "Liberation Mono", monospace; margin: 0 24px 0 27px; }
.view-tools { display: flex; gap: 8px; margin-right: 6px; }
.view-tools button { display: flex; }
.view-tools svg { width: 20px; height: 18px; }
.small { margin-left: 5px; }
.scroller { flex: 1; display: flex; justify-content: center; padding-left: 40px; }
.scroller .knob { width: 21px; height: 20px; }

/* status bar */
.status { flex: none; height: 29px; align-items: center; background: #d6d6d6; border-top: 2px solid #8c918c; white-space: nowrap; overflow: hidden; }
.msg { flex: none; width: 756px; padding-left: 1px; }
.s20 { width: 20px; height: 20px; }
.combo { flex: none; width: 254px; height: 23px; margin-left: 9px; border-color: #e8e8e8; background-color: #fdfdfd; color: #777; }
.combo.main { padding-left: 1px; }
.req { margin-left: 8px; }
.count { width: 41px; padding-left: 7px; }
.opt { margin-right: 10px; }
.filters { display: flex; align-items: center; gap: 10px; margin-left: auto; width: 203px; flex: none; }
.filters button { display: flex; flex: none; }
.filters svg { width: 20px; height: 20px; }
.filters span { margin-left: -9px; }
```
